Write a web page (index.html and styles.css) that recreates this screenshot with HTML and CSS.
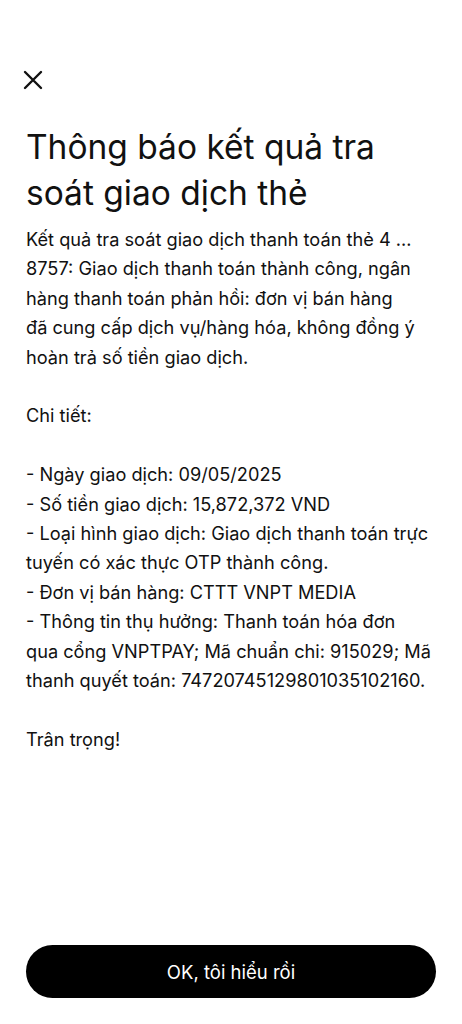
FILE: index.html
```html
<!DOCTYPE html>
<html lang="vi">
<head>
<meta charset="utf-8">
<link rel="stylesheet" href="styles.css">
</head>
<body>
<div class="page">
  <div class="top">
    <svg class="close" viewBox="0 0 20 20" width="20" height="20"><path d="M2 2L18 18M18 2L2 18" stroke="#111" stroke-width="2.4" stroke-linecap="round"/></svg>
  </div>
  <h1 class="title">Thông báo kết quả tra soát giao dịch thẻ</h1>
  <div class="content">
    <p>Kết quả tra soát giao dịch thanh toán thẻ 4 …<br>8757: Giao dịch thanh toán thành công, ngân<br>hàng thanh toán phản hồi: đơn vị bán hàng<br>đã cung cấp dịch vụ/hàng hóa, không đồng ý<br>hoàn trả số tiền giao dịch.</p>
    <p>Chi tiết:</p>
    <p>- Ngày giao dịch: 09/05/2025<br>- Số tiền giao dịch: 15,872,372 VND<br>- Loại hình giao dịch: Giao dịch thanh toán trực<br>tuyến có xác thực OTP thành công.<br>- Đơn vị bán hàng: CTTT VNPT MEDIA<br>- Thông tin thụ hưởng: Thanh toán hóa đơn<br>qua cổng VNPTPAY; Mã chuẩn chi: 915029; Mã<br>thanh quyết toán: 74720745129801035102160.</p>
    <p>Trân trọng!</p>
  </div>
  <div class="footer">
    <button class="ok">OK, tôi hiểu rồi</button>
  </div>
</div>
</body>
</html>
```
FILE: styles.css
```css
html, body { margin: 0; padding: 0; background: #fff; }
body { font-family: Inter, "Noto Sans", sans-serif; color: #111; }
.page { width: 462px; height: 1024px; box-sizing: border-box; padding: 0 26px; display: flex; flex-direction: column; }
.top { padding-top: 70px; height: 20px; }
.close { display: block; margin-left: -3px; }
.title { margin: 34px 0 0; font-size: 33.5px; font-weight: 400; line-height: 46px; letter-spacing: 0; }
.content { margin-top: 9px; font-size: 18.2px; line-height: 29.4px; white-space: nowrap; }
.content p { margin: 0 0 29.4px; }
.footer { margin-top: auto; padding-bottom: 26px; }
.ok { width: 100%; height: 53px; border: none; border-radius: 27px; background: #000; color: #fff; font-family: inherit; font-size: 18.5px; }
```
